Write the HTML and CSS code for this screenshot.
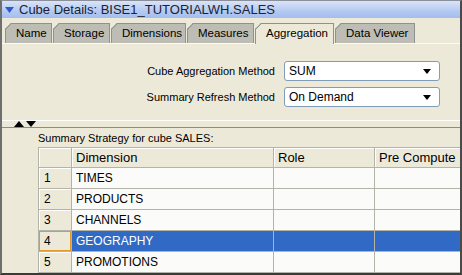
FILE: index.html
```html
<!DOCTYPE html>
<html>
  <head>
    <title>Cube Details</title>
    <link rel="stylesheet" href="styles.css">
  </head>
  <body>
    <div class="frame">

      <!-- title bar -->
      <div class="titlebar">
        <svg class="caret" width="9" height="6" viewBox="0 0 9 6"><path d="M0 0h9L4.5 6z" fill="#2f58c8"/></svg>
        <span>Cube Details: BISE1_TUTORIALWH.SALES</span>
      </div>

      <!-- tabs -->
      <div class="tabs">
        <div class="tab" style="width:47px">Name</div>
        <div class="tab" style="width:57px">Storage</div>
        <div class="tab" style="width:75px">Dimensions</div>
        <div class="tab" style="width:67px">Measures</div>
        <div class="tab active" style="width:79px">Aggregation</div>
        <div class="tab" style="width:80px">Data Viewer</div>
      </div>

      <div class="content">
        <div class="form">
          <label>Cube Aggregation Method</label>
          <div class="select"><span>SUM</span><i class="arrow"></i></div>
          <label>Summary Refresh Method</label>
          <div class="select"><span>On Demand</span><i class="arrow"></i></div>
        </div>

        <div class="splitter">
          <svg width="22" height="6" viewBox="0 0 22 6"><path d="M0 6L5 0L10 6z M12 0h10L17 6z" fill="#000"/></svg>
        </div>

        <div class="caption">Summary Strategy for cube SALES:</div>

        <div class="grid-wrap">
          <table class="grid">
            <tr class="head">
              <th class="num"></th>
              <th class="c1">Dimension</th>
              <th class="c2">Role</th>
              <th class="c3">Pre Compute</th>
            </tr>
            <tr><td class="num">1</td><td>TIMES</td><td></td><td></td></tr>
            <tr><td class="num">2</td><td>PRODUCTS</td><td></td><td></td></tr>
            <tr><td class="num">3</td><td>CHANNELS</td><td></td><td></td></tr>
            <tr class="sel"><td class="num focus">4</td><td>GEOGRAPHY</td><td></td><td></td></tr>
            <tr><td class="num">5</td><td>PROMOTIONS</td><td></td><td></td></tr>
          </table>
        </div>
      </div>

    </div>
  </body>
</html>
```

FILE: styles.css
```css
html, body { margin: 0; padding: 0; overflow: hidden; }
body {
  width: 462px;
  height: 275px;
  background: #ece9d8;
  font-family: "Liberation Sans", Arial, sans-serif;
  font-size: 12px;
  color: #000;
}

.frame {
  box-sizing: border-box;
  height: 275px;
  border-top: 1px solid #8a8f9a;
  border-left: 2px solid #6f6f6f;
  border-right: 2px solid #4a4a4a;
  border-bottom: 2px solid #3a3a3a;
  overflow: hidden;
}

.titlebar {
  height: 17px;
  display: flex;
  align-items: center;
  gap: 5px;
  padding-left: 3px;
  background: linear-gradient(#d9e4f8, #b4c9f1 60%, #a3bdee);
  color: #1a2333;
  font-size: 13px;
}
.caret { margin-top: 1px; }

/* tabs */
.tabs {
  display: flex;
  padding-left: 3px;
  margin-top: 5px;
  height: 20px;
  font-size: 11.5px;
}
.tab {
  box-sizing: border-box;
  height: 20px;
  margin-right: 1px;
  padding-left: 10px;
  line-height: 19px;
  background: #bdbdb5;
  border: 1px solid #8e9390;
  border-bottom: none;
  clip-path: polygon(0 6px, 6px 0, 100% 0, 100% 100%, 0 100%);
  position: relative;
}
.tab::before {
  content: "";
  position: absolute;
  left: -1px;
  top: -1px;
  width: 9px;
  height: 9px;
  background: linear-gradient(135deg, transparent 4px, #8e9390 4px, #8e9390 5px, transparent 5px);
}
.tab.active {
  background: #ece9d8;
  height: 21px;
  margin-bottom: -1px;
}

.content {
  border-top: 1px solid #fbfbf8;
  height: 230px;
}

.form {
  display: grid;
  grid-template-columns: 273px 156px;
  column-gap: 9px;
  row-gap: 6px;
  padding-top: 17px;
  align-items: center;
}
.form label { text-align: right; font-size: 11px; }
.select {
  box-sizing: border-box;
  height: 20px;
  background: #fff;
  border: 1px solid #7f9db9;
  border-radius: 3px;
  display: flex;
  align-items: center;
  justify-content: space-between;
  padding: 0 8px 0 4px;
}
.arrow {
  width: 0;
  height: 0;
  border-left: 4px solid transparent;
  border-right: 4px solid transparent;
  border-top: 5px solid #000;
}

.splitter {
  margin-top: 13px;
  border-top: 1px solid #fff;
  border-bottom: 1px solid #8c8c84;
  height: 6px;
  padding-left: 12px;
  line-height: 0;
}

.caption {
  margin-top: 3px;
  padding-left: 36px;
  height: 16px;
  font-size: 11px;
  line-height: 14px;
}

.grid-wrap {
  margin-left: 36px;
  overflow: hidden;
}
.grid {
  border-collapse: collapse;
  table-layout: fixed;
  width: 460px;
}
.grid th, .grid td {
  border: 1px solid #b3b3aa;
  height: 20px;
  padding: 0 0 0 4px;
  text-align: left;
  font-weight: normal;
  background: #fbfcfa;
  white-space: nowrap;
}
.grid .head th {
  height: 19px;
  font-size: 13px;
  background: #ece9d8;
  box-shadow: inset 1px 1px 0 #fff;
}
.grid .num {
  width: 27px;
  padding-left: 5px;
  background: #ece9d8;
  box-shadow: inset 1px 1px 0 #fff;
}
.grid .c1 { width: 197px; }
.grid .c2 { width: 96px; }
.grid .num.focus { box-shadow: inset 0 0 0 1px #e39a2a; }
.grid .sel td:not(.num) { background: #316ac5; color: #fff; }
```
